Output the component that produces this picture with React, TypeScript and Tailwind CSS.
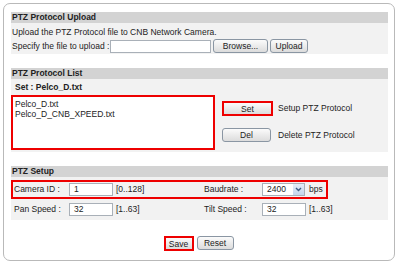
import React from "react";

const btn =
  "h-[14px] border border-[#8a96a3] rounded-[3px] bg-gradient-to-b from-[#fbfbfb] to-[#dcdcdc] text-[8.5px] leading-[12px] text-[#222] flex items-center justify-center shrink-0 whitespace-nowrap";

function Header({ children }: { children: React.ReactNode }) {
  return (
    <div className="h-[11px] bg-[#d3d3d3] font-bold leading-[11px] pl-[1px] text-[#222]">
      {children}
    </div>
  );
}

function TextInput({ value, w }: { value: string; w: string }) {
  return (
    <div
      className={`${w} h-[13px] shrink-0 border border-[#a9b0b8] bg-white leading-[11px] pl-[4px] text-[8.5px]`}
    >
      {value}
    </div>
  );
}

export default function App() {
  return (
    <div
      className="w-[399px] h-[264px] bg-white pt-[3px] pl-[3px] text-[8.5px] text-[#222] whitespace-nowrap"
      style={{ fontFamily: '"Liberation Sans", Arial, sans-serif' }}
    >
      <div className="w-[392px] h-[258px] border border-[#b9b9b9] rounded-[7px] pl-[7px] pr-[6px] pt-[8px] flex flex-col">
        {/* Section 1 */}
        <Header>PTZ Protocol Upload</Header>
        <div className="bg-[#f2f2f2] h-[31px] pl-[1px] pt-[3px]">
          <div className="h-[12px] leading-[12px]">
            Upload the PTZ Protocol file to CNB Network Camera.
          </div>
          <div className="flex items-center h-[14px] mt-[1px]">
            <span className="w-[98px] shrink-0">Specify the file to upload :</span>
            <TextInput value="" w="w-[101px]" />
            <div className={`${btn} w-[55px] ml-[2px] border-[#6e86a3]`}>Browse...</div>
            <div className={`${btn} w-[38px] ml-[2px]`}>Upload</div>
          </div>
        </div>

        {/* Section 2 */}
        <div className="mt-[14px]">
          <Header>PTZ Protocol List</Header>
          <div className="bg-[#f2f2f2] h-[73px] flex flex-col">
            <div className="h-[16px] leading-[16px] pl-[4px] font-bold">Set : Pelco_D.txt</div>
            <div className="flex">
              <div className="w-[204px] h-[55px] border-2 border-[#ee0000] bg-white pl-[2px] pt-[2px] leading-[10px]">
                <div>Pelco_D.txt</div>
                <div>Pelco_D_CNB_XPEED.txt</div>
              </div>
              <div className="flex flex-col ml-[7px] pt-[6px]">
                <div className="flex items-center h-[15px]">
                  <div className={`${btn} w-[51px] h-[15px] border-2 border-[#ee0000] rounded-none`}>Set</div>
                  <span className="ml-[5px]">Setup PTZ Protocol</span>
                </div>
                <div className="flex items-center h-[14px] mt-[12px]">
                  <div className={`${btn} w-[49px] h-[14px]`}>Del</div>
                  <span className="ml-[7px]">Delete PTZ Protocol</span>
                </div>
              </div>
            </div>
          </div>
        </div>

        {/* Section 3 */}
        <div className="mt-[14px]">
          <Header>PTZ Setup</Header>
          <div className="bg-[#f2f2f2] h-[43px] pt-[3px]">
            <div className="w-[317px] h-[19px] border-2 border-[#ee0000] flex items-center">
              <span className="w-[56px] shrink-0 pl-[1px]">Camera ID :</span>
              <TextInput value="1" w="w-[44px]" />
              <span className="ml-[3px] w-[88px] shrink-0">[0..128]</span>
              <span className="w-[58px] shrink-0">Baudrate :</span>
              <div className="w-[43px] h-[13px] shrink-0 border border-[#a9b0b8] bg-white flex items-center justify-between pl-[4px]">
                <span className="leading-[11px]">2400</span>
                <div className="w-[11px] h-[11px] bg-gradient-to-b from-[#e4edf8] to-[#c5d6ec] flex items-center justify-center">
                  <svg width="7" height="5" viewBox="0 0 7 5">
                    <path d="M1 1 L3.5 3.5 L6 1" stroke="#3b5a85" strokeWidth="1.4" fill="none" />
                  </svg>
                </div>
              </div>
              <span className="ml-[4px]">bps</span>
            </div>
            <div className="flex items-center h-[14px] mt-[3px] pl-[2px]">
              <span className="w-[56px] shrink-0 pl-[1px]">Pan Speed :</span>
              <TextInput value="32" w="w-[44px]" />
              <span className="ml-[3px] w-[88px] shrink-0">[1..63]</span>
              <span className="w-[58px] shrink-0">Tilt Speed :</span>
              <TextInput value="32" w="w-[44px]" />
              <span className="ml-[3px]">[1..63]</span>
            </div>
          </div>
        </div>

        {/* Buttons */}
        <div className="flex justify-center mt-[16px] pr-[2px]">
          <div className={`${btn} w-[30px] h-[15px] border-2 border-[#ee0000] rounded-none`}>Save</div>
          <div className={`${btn} w-[37px] ml-[3px]`}>Reset</div>
        </div>
      </div>
    </div>
  );
}
